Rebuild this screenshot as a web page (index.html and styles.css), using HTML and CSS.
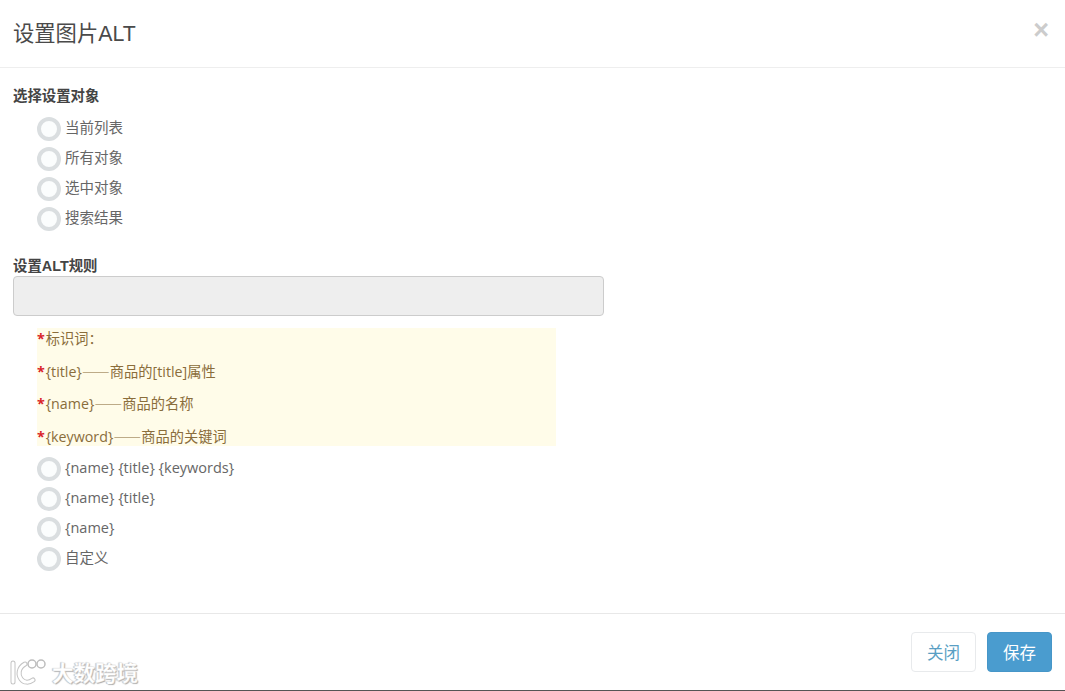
FILE: index.html
```html
<!DOCTYPE html>
<html lang="zh-CN">
<head>
	<title>设置图片ALT</title>
	<meta charset="UTF-8">
	<meta name="viewport" content="width=device-width, initial-scale=1.0">
	<link rel="stylesheet" href="styles.css">
</head>
<body>
	<div class="modal">
		<header class="modal-header">
			<h4>设置图片ALT</h4>
			<span class="close">×</span>
		</header>
		<div class="modal-body">
			<div class="field-title">选择设置对象</div>
			<ul class="radio-list">
				<li><i class="radio"></i>当前列表</li>
				<li><i class="radio"></i>所有对象</li>
				<li><i class="radio"></i>选中对象</li>
				<li><i class="radio"></i>搜索结果</li>
			</ul>
			<div class="field-title second">设置ALT规则</div>
			<div class="rule-input"></div>
			<div class="notes">
				<p><b>*</b>标识词<span class="colon">：</span></p>
				<p><b>*</b>{title}<span class="dash">——</span>商品的[title]属性</p>
				<p><b>*</b>{name}<span class="dash">——</span>商品的名称</p>
				<p><b>*</b>{keyword}<span class="dash">——</span>商品的关键词</p>
			</div>
			<ul class="radio-list">
				<li><i class="radio"></i>{name} {title} {keywords}</li>
				<li><i class="radio"></i>{name} {title}</li>
				<li><i class="radio"></i>{name}</li>
				<li><i class="radio"></i>自定义</li>
			</ul>
		</div>
		<footer class="modal-footer">
			<button class="btn">关闭</button>
			<button class="btn primary">保存</button>
		</footer>
		<div class="watermark">
			<svg width="38" height="26" viewBox="0 0 38 26" fill="none" stroke-linecap="round">
				<path d="M5 4 L5 23" stroke="#c4c4c4" stroke-width="5"/>
				<path d="M17 5 C10 9 10 16 13 20 C16 24 21 24 25 21" stroke="#c4c4c4" stroke-width="5"/>
				<path d="M5 4 L5 23" stroke="#fff" stroke-width="3"/>
				<path d="M17 5 C10 9 10 16 13 20 C16 24 21 24 25 21" stroke="#fff" stroke-width="3"/>
				<circle cx="24" cy="5" r="4" stroke="#bdbdbd" stroke-width="1.5"/>
				<circle cx="33" cy="5" r="4" stroke="#bdbdbd" stroke-width="1.5"/>
			</svg>
			<span>大数跨境</span>
		</div>
	</div>
</body>
</html>
```

FILE: styles.css
```css
* {
	box-sizing: border-box;
}
body {
	margin: 0;
	padding: 0;
	background-color: #fff;
	color: #666;
	font-family: "Open Sans", "Noto Sans CJK SC", sans-serif;
	font-size: 14.5px;
}
.modal {
	height: 691px;
	display: flex;
	flex-direction: column;
	position: relative;
	border-bottom: 1px solid #555;
	overflow: hidden;
}
.modal-header {
	height: 68px;
	flex-shrink: 0;
	display: flex;
	justify-content: space-between;
	padding: 0 13px 0 13px;
	border-bottom: 1px solid #eee;
}
.modal-header h4 {
	margin: 0;
	padding-top: 19px;
	font-family: "Liberation Sans", "Noto Sans CJK SC", sans-serif;
	font-size: 21.3px;
	line-height: 30px;
	font-weight: normal;
	color: #4a4a4a;
}
.close {
	margin: 12px 3px 0 0;
	font-family: "Liberation Sans", sans-serif;
	font-size: 27px;
	line-height: 36px;
	font-weight: bold;
	color: #ccc;
}
.modal-body {
	flex-grow: 1;
	padding: 18px 13px 0;
}
.field-title {
	font-family: "Liberation Sans", "Noto Sans CJK SC", sans-serif;
	font-weight: bold;
	font-size: 14.4px;
	line-height: 20px;
	color: #444;
}
.field-title.second {
	margin-top: 23px;
}
.radio-list {
	list-style: none;
	margin: 0;
	padding: 0 0 0 24px;
}
.modal-body > .field-title + .radio-list {
	margin-top: 7px;
}
.radio-list li {
	height: 30px;
	display: flex;
	align-items: flex-start;
	line-height: 30px;
}
.radio {
	width: 24px;
	height: 24px;
	margin: 4px 4px 0 0;
	border: 4px solid #dadee0;
	border-radius: 50%;
	background-color: #fbfdfd;
	flex-shrink: 0;
}
.rule-input {
	width: 591px;
	height: 40px;
	background-color: #eee;
	border: 1px solid #ccc;
	border-radius: 4px;
}
.notes {
	width: 519px;
	height: 118px;
	margin: 12px 0 7px 24px;
	background-color: #fffce9;
	color: #8a6d3b;
	font-size: 14.25px;
}
.notes p {
	margin: 0;
	height: 32.5px;
	line-height: 20px;
}
.notes b {
	color: #d9232a;
	font-weight: bold;
	margin-right: 1px;
}
.dash {
	font-family: "Noto Sans CJK SC", sans-serif;
	font-size: 14px;
}
.colon {
	font-family: "Noto Sans CJK TC", sans-serif;
}
.modal-footer {
	height: 77px;
	flex-shrink: 0;
	display: flex;
	justify-content: flex-end;
	gap: 11px;
	padding: 18px 13px 0;
	border-top: 1px solid #e8e8e8;
}
.btn {
	width: 65px;
	height: 40px;
	padding: 0;
	font-family: "Noto Sans CJK SC", sans-serif;
	font-size: 16.5px;
	color: #5a9fc4;
	background-color: #fff;
	border: 1px solid #e8eaec;
	border-radius: 4px;
}
.btn.primary {
	color: #fff;
	background-color: #4a9ccf;
	border-color: #4696c8;
}
.watermark {
	position: absolute;
	left: 8px;
	bottom: 4px;
	display: flex;
	align-items: center;
	gap: 6px;
}
.watermark span {
	font-family: "Noto Sans CJK SC", sans-serif;
	font-size: 21.5px;
	font-weight: bold;
	line-height: 28px;
	color: #fff;
	-webkit-text-stroke: 0.3px #ddd;
	text-shadow: 1px 1px 1px #aaa, -1px 0 1px #bbb;
}
```
